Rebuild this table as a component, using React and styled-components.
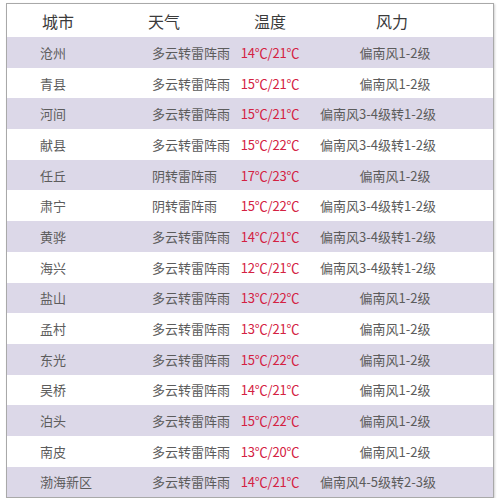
import styled, { createGlobalStyle } from 'styled-components';

const GlobalStyle = createGlobalStyle`
    html, body{
        margin: 0;
        padding: 0;
        background: #ffffff;
    }
    body{
        font-family: "Noto Sans CJK SC", "Noto Sans", sans-serif;
    }
`

const Page = styled.div`
    padding: 3px 6px 0 6px;
`

const Frame = styled.div`
    width: 486px;
    border: 1px solid #a9a9a9;
    box-shadow: 1px 1px 2px rgba(0, 0, 0, 0.18);
    background: #ffffff;
`

const Row = styled.div`
    display: grid;
    grid-template-columns: 138px 91px 68px 189px;
    height: ${p => p.$head ? '33px' : '30.7px'};
    align-items: center;
    background: ${p => p.$shade ? '#dcd8e8' : '#ffffff'};
    color: ${p => p.$head ? '#3b3b3b' : '#5c5c5c'};
    font-size: ${p => p.$head ? '16px' : '13px'};
    white-space: nowrap;
`

const City = styled.div`
    padding-left: ${p => p.$head ? '35px' : '33px'};
`

const Weather = styled.div`
    padding-left: ${p => p.$head ? '3px' : '7px'};
`

const Temp = styled.div`
    text-align: center;
    color: ${p => p.$head ? '#3b3b3b' : '#d42142'};
    letter-spacing: ${p => p.$head ? '0' : '-0.2px'};
`

const Wind = styled.div`
    display: flex;
    justify-content: ${p => p.$long ? 'flex-start' : 'center'};
    padding: 0 ${p => p.$head ? '29px' : '23px'} 0 16px;
`

const rows = [
    ['沧州', '多云转雷阵雨', '14℃/21℃', '偏南风1-2级'],
    ['青县', '多云转雷阵雨', '15℃/21℃', '偏南风1-2级'],
    ['河间', '多云转雷阵雨', '15℃/21℃', '偏南风3-4级转1-2级'],
    ['献县', '多云转雷阵雨', '15℃/22℃', '偏南风3-4级转1-2级'],
    ['任丘', '阴转雷阵雨', '17℃/23℃', '偏南风1-2级'],
    ['肃宁', '阴转雷阵雨', '15℃/22℃', '偏南风3-4级转1-2级'],
    ['黄骅', '多云转雷阵雨', '14℃/21℃', '偏南风3-4级转1-2级'],
    ['海兴', '多云转雷阵雨', '12℃/21℃', '偏南风3-4级转1-2级'],
    ['盐山', '多云转雷阵雨', '13℃/22℃', '偏南风1-2级'],
    ['孟村', '多云转雷阵雨', '13℃/21℃', '偏南风1-2级'],
    ['东光', '多云转雷阵雨', '15℃/22℃', '偏南风1-2级'],
    ['吴桥', '多云转雷阵雨', '14℃/21℃', '偏南风1-2级'],
    ['泊头', '多云转雷阵雨', '15℃/22℃', '偏南风1-2级'],
    ['南皮', '多云转雷阵雨', '13℃/20℃', '偏南风1-2级'],
    ['渤海新区', '多云转雷阵雨', '14℃/21℃', '偏南风4-5级转2-3级'],
]

export default function App(){
    return(
        <Page>
            <GlobalStyle/>
            <Frame>
                <Row $head>
                    <City $head>城市</City>
                    <Weather $head>天气</Weather>
                    <Temp $head>温度</Temp>
                    <Wind $head>风力</Wind>
                </Row>
                {rows.map((r, i) => (
                    <Row key={r[0]} $shade={i % 2 === 0}>
                        <City>{r[0]}</City>
                        <Weather>{r[1]}</Weather>
                        <Temp>{r[2]}</Temp>
                        <Wind $long={r[3].length > 7}>{r[3]}</Wind>
                    </Row>
                ))}
            </Frame>
        </Page>
    )
}
